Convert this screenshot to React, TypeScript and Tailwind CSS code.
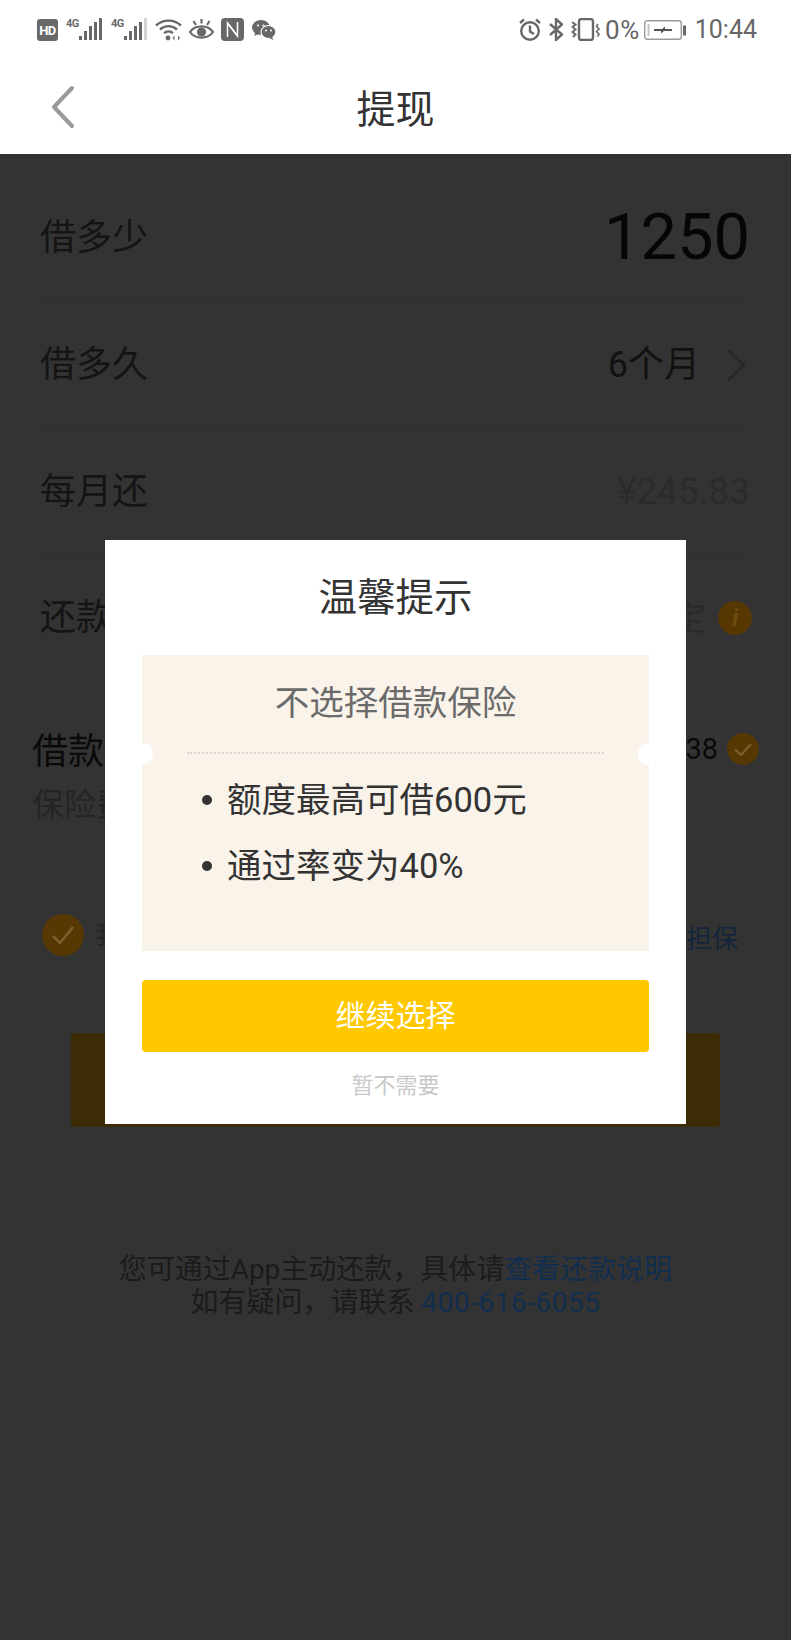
const HdIcon = () => (
  <div className="w-[21px] h-[22px] rounded-[3px] bg-[#686868] flex items-center justify-center text-white text-[13px] font-bold leading-none tracking-[-0.5px]">
    HD
  </div>
);

const Signal = ({ dim }: { dim?: boolean }) => (
  <div className="relative w-[37px] h-[23px]">
    <span className="absolute left-0 top-[-1px] text-[11px] leading-[13px] font-bold text-[#6a6a6a] tracking-[-0.5px]">
      4G
    </span>
    <svg className="absolute left-0 top-0" width="37" height="23" viewBox="0 0 37 23" fill="#686868">
      <rect x="13" y="18" width="3" height="4" />
      <rect x="18" y="13" width="3" height="9" />
      <rect x="23" y="8" width="3" height="14" />
      <rect x="28" y="4" width="3" height="18" />
      <rect x="33" y="0" width="3" height="22" fill={dim ? "#d4d4d4" : "#686868"} />
    </svg>
  </div>
);

const WifiIcon = () => (
  <svg width="27" height="23" viewBox="0 0 27 23" fill="none" stroke="#686868" strokeWidth="2.4">
    <path d="M1 7.5C8 1 19 1 26 7.5" />
    <path d="M5 11.5C10 7 17 7 22 11.5" />
    <path d="M9 15.2C11.6 13 15.4 13 18 15.2" />
    <circle cx="13" cy="20" r="2.4" fill="#686868" stroke="none" />
    <path d="M19.5 17.5L17.5 20L19.5 22.5Z" fill="#686868" stroke="none" />
    <path d="M23 17.5L25 20L23 22.5Z" fill="#686868" stroke="none" />
  </svg>
);

const EyeIcon = () => (
  <svg width="25" height="23" viewBox="0 0 25 23" fill="none" stroke="#686868" strokeWidth="2.2">
    <path d="M1 14C6 6.5 19 6.5 24 14C19 21.5 6 21.5 1 14Z" />
    <circle cx="12.5" cy="14" r="4.6" fill="#686868" stroke="none" />
    <path d="M12.5 1V5.5M4.5 3L7 7M20.5 3L18 7" />
  </svg>
);

const NfcIcon = () => (
  <svg width="23" height="23" viewBox="0 0 23 23">
    <rect width="23" height="23" rx="4" fill="#686868" />
    <path d="M6.5 19V5L16.5 18" fill="none" stroke="#fff" strokeWidth="1.5" />
    <path d="M16.5 4V18L6.5 5" fill="none" stroke="#fff" strokeWidth="1.5" />
  </svg>
);

const WechatIcon = () => (
  <svg width="24" height="20" viewBox="0 0 24 20" fill="#686868">
    <ellipse cx="9" cy="7.5" rx="9" ry="7.5" />
    <path d="M3 12L2.5 16L7 13.5Z" />
    <ellipse cx="16.5" cy="12" rx="7.5" ry="6.5" stroke="#fff" strokeWidth="1.2" />
    <path d="M20 17L21.5 20L17 18Z" />
    <circle cx="6" cy="5.5" r="1.1" fill="#fff" />
    <circle cx="11.5" cy="5.5" r="1.1" fill="#fff" />
    <circle cx="14" cy="10.5" r="1" fill="#fff" />
    <circle cx="19" cy="10.5" r="1" fill="#fff" />
  </svg>
);

const AlarmIcon = () => (
  <svg width="22" height="23" viewBox="0 0 22 23" fill="none" stroke="#686868" strokeWidth="2.4">
    <circle cx="11" cy="13" r="8.8" />
    <path d="M11 7.5V13.5L15 16" />
    <path d="M1 5L5 1.5M21 5L17 1.5" />
  </svg>
);

const BluetoothIcon = () => (
  <svg width="14" height="23" viewBox="0 0 14 23" fill="none" stroke="#686868" strokeWidth="2.4">
    <path d="M1 6L13 16.5L7 22V1L13 6.5L1 17" />
  </svg>
);

const VibrateIcon = () => (
  <svg width="30" height="23" viewBox="0 0 30 23" fill="none" stroke="#686868" strokeWidth="2">
    <rect x="8" y="1" width="14" height="21" rx="2.5" strokeWidth="2.4" />
    <path d="M1 4L4.5 6.5L1.5 9L4.5 11.5L1.5 14L4.5 16.5L2 19" />
    <path d="M27 6L25.5 8.5L28 11L25.5 13.5L28 16L26.5 18.5" strokeWidth="1.6" />
  </svg>
);

const BatteryIcon = () => (
  <svg width="42" height="20" viewBox="0 0 42 20" fill="none">
    <rect x="0.7" y="0.7" width="36.6" height="18.6" rx="2.5" stroke="#9a9a9a" strokeWidth="1.4" />
    <rect x="3.5" y="4" width="2" height="12" fill="#c4c4c4" />
    <path d="M10 9H18L21 6.5V9H28V11H20L17 13.5V11H10Z" fill="#555" />
    <rect x="39" y="5.5" width="3" height="10" fill="#686868" />
  </svg>
);

const StatusBar = () => (
  <div className="h-[60px] pl-[37px] pr-[34px] flex justify-between items-start pt-[18px] text-[#666]">
    <div className="flex items-start">
      <div className="mt-[1px]"><HdIcon /></div>
      <div className="ml-[8px]"><Signal /></div>
      <div className="ml-[8px]"><Signal dim /></div>
      <div className="ml-[7px]"><WifiIcon /></div>
      <div className="ml-[7px]"><EyeIcon /></div>
      <div className="ml-[7px]"><NfcIcon /></div>
      <div className="ml-[8px] mt-[2px]"><WechatIcon /></div>
    </div>
    <div className="flex items-center h-[23px]">
      <AlarmIcon />
      <div className="ml-[8px]"><BluetoothIcon /></div>
      <div className="ml-[8px]"><VibrateIcon /></div>
      <span className="ml-[4px] text-[26px] leading-none tracking-[0.5px]">0%</span>
      <div className="ml-[4px]"><BatteryIcon /></div>
      <span className="ml-[9px] text-[25px] leading-none">10:44</span>
    </div>
  </div>
);

const Row = ({ label, last, children }: { label: string; last?: boolean; children: React.ReactNode }) => (
  <div className={`h-[127px] flex items-center justify-between ${last ? "" : "pt-[3px] border-b border-[#2f2f2f]"}`}>
    <span className="text-[36px] leading-none text-[#141414]">{label}</span>
    {children}
  </div>
);

function App() {
  return (
    <main className="relative w-[791px] h-[1640px] overflow-hidden bg-[#333333] font-[Roboto,'Noto_Sans_CJK_SC',sans-serif]">
      <header className="h-[154px] bg-white">
        <StatusBar />
        <div className="relative h-[94px] flex items-center justify-center">
          <svg className="absolute left-[50px] top-[25px]" width="26" height="44" viewBox="0 0 26 44" fill="none" stroke="#9a9a9a" strokeWidth="4" strokeLinecap="round" strokeLinejoin="round">
            <path d="M22 3L4 22L22 41" />
          </svg>
          <h1 className="text-[39px] leading-none text-[#333] mb-[-7px]">提现</h1>
        </div>
      </header>

      <section className="mt-[19px] pl-[40px] pr-[41px]">
        <Row label="借多少">
          <span className="text-[65px] leading-none text-[#060606]">1250</span>
        </Row>
        <Row label="借多久">
          <div className="flex items-center">
            <span className="text-[36px] leading-none text-[#111]">6个月</span>
            <svg className="ml-[26px] mr-[4px]" width="20" height="34" viewBox="0 0 20 34" fill="none" stroke="#272727" strokeWidth="2.5">
              <path d="M2 2L18 17L2 32" />
            </svg>
          </div>
        </Row>
        <Row label="每月还">
          <span className="text-[37px] leading-none text-[#2b2b2b]">¥245.83</span>
        </Row>
        <Row label="还款" last>
          <div className="flex items-center">
            <span className="text-[34px] leading-none text-[#2a2a2a]">定</span>
            <div className="ml-[12px] mr-[-2px] w-[34px] h-[34px] rounded-full bg-[#573803] flex items-center justify-center text-[24px] leading-none italic font-bold text-[#6e4c10]">
              i
            </div>
          </div>
        </Row>
      </section>

      <section className="pl-[32px] pr-[32px] pt-[51px] pb-[31px]">
        <div className="h-[40px] flex items-center justify-between">
          <span className="text-[36px] leading-none text-[#0a0a0a]">借款</span>
          <div className="flex items-center mb-[6px]">
            <span className="text-[29px] leading-none text-[#0a0a0a]">38</span>
            <svg className="ml-[9px]" width="32" height="32" viewBox="0 0 32 32" fill="none">
              <circle cx="16" cy="16" r="16" fill="#573803" />
              <path d="M8 16.5L14 22L24 11" stroke="#7a6030" strokeWidth="2.2" />
            </svg>
          </div>
        </div>
        <p className="mt-[13px] h-[40px] flex items-center text-[32px] leading-none text-[#242424]">保险费</p>
      </section>

      <div className="mt-[58px] pl-[42px] pr-[53px] flex items-center justify-between">
        <div className="flex items-center">
          <svg width="42" height="42" viewBox="0 0 42 42" fill="none">
            <circle cx="21" cy="21" r="21" fill="#573803" />
            <path d="M11 22L18 29L31 13" stroke="#7a6030" strokeWidth="2.5" />
          </svg>
          <span className="ml-[11px] text-[26px] leading-none text-[#262626]">我</span>
        </div>
        <span className="pt-[7px] text-[26px] leading-none text-[#14253c]">担保</span>
      </div>

      <div className="mt-[77px] mx-[71px] h-[94px] rounded-[4px] bg-[#3b2c05]" />

      <footer className="mt-[126px] text-center text-[28px] leading-[33px] text-[#1b1b1b]">
        <p>
          您可通过App主动还款，具体请<span className="text-[#112e4f]">查看还款说明</span>
        </p>
        <p>
          如有疑问，请联系 <span className="text-[#112e4f] tracking-[0.5px]">400-616-6055</span>
        </p>
      </footer>

      <div className="absolute left-[105px] top-[540px] w-[581px] h-[584px] bg-white flex flex-col items-center">
        <h2 className="mt-[38px] h-[40px] flex items-center text-[38.5px] leading-none text-[#333]">温馨提示</h2>
        <div className="relative mt-[37px] w-[507px] h-[296px] overflow-hidden bg-[#faf3ea]">
          <p className="mt-[29px] h-[38px] flex items-center justify-center text-[34.5px] leading-none text-[#6b6b6b]">
            不选择借款保险
          </p>
          <div className="absolute left-[-11px] top-[88px] w-[22px] h-[22px] rounded-full bg-white" />
          <div className="absolute right-[-11px] top-[88px] w-[22px] h-[22px] rounded-full bg-white" />
          <div className="mt-[30px] mx-[45px] border-t-2 border-dotted border-[#d9d6d0]" />
          <ul className="mt-[27px] pl-[85px] flex flex-col gap-[28px] text-[34.5px] leading-[38px] text-[#333]">
            <li className="relative">
              <span className="absolute left-[-25px] top-[14px] w-[10px] h-[10px] rounded-full bg-[#333]" />
              额度最高可借600元
            </li>
            <li className="relative">
              <span className="absolute left-[-25px] top-[14px] w-[10px] h-[10px] rounded-full bg-[#333]" />
              通过率变为40%
            </li>
          </ul>
        </div>
        <button className="mt-[29px] w-[507px] h-[72px] rounded-[4px] bg-[#ffc800] text-white text-[30px] leading-none">
          继续选择
        </button>
        <span className="mt-[23px] text-[22px] leading-none text-[#c8c8c8]">暂不需要</span>
      </div>
    </main>
  );
}

export default App;
